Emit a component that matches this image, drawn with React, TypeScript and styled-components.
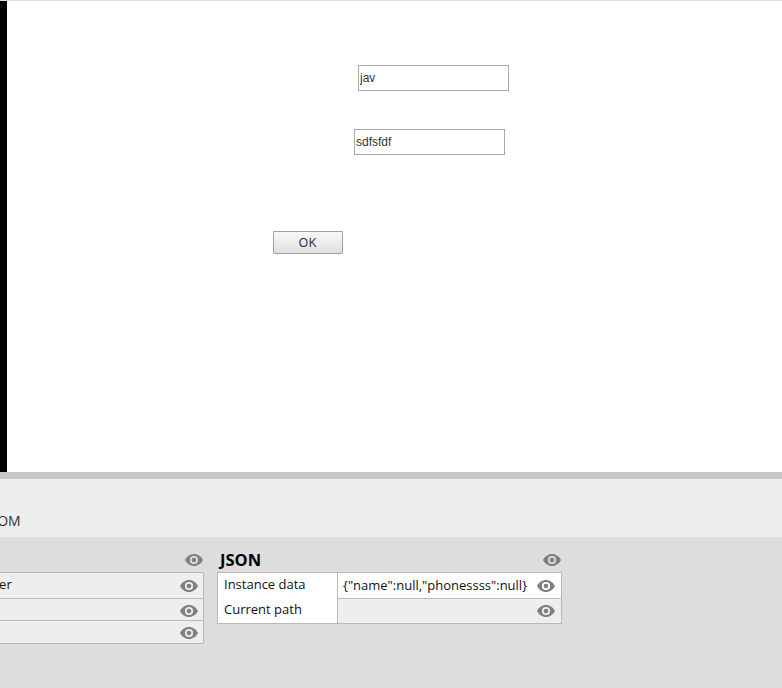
import { createGlobalStyle, styled } from "styled-components";

const GlobalStyle = createGlobalStyle`
  html, body {
    margin: 0;
    padding: 0;
    background: #dddddd;
  }
  body {
    width: 782px;
    height: 688px;
    overflow: hidden;
    font-family: "Open Sans", "Noto Sans", sans-serif;
  }
`;

const Page = styled.div`
  display: flex;
  flex-direction: column;
  width: 782px;
  height: 688px;
  overflow: hidden;
`;

const Stage = styled.div`
  display: flex;
  height: 472px;
  background: #ffffff;
  border-top: 1px solid #dcdcdc;
  box-sizing: border-box;
`;

const BlackBar = styled.div`
  width: 7px;
  background: #000000;
`;

const Form = styled.div`
  flex: 1;
  display: flex;
  flex-direction: column;
  align-items: flex-start;
  padding-top: 64px;
  font-family: "Liberation Sans", Arial, sans-serif;
`;

const TextField = styled.input<{ $left: number; $gap?: number }>`
  box-sizing: border-box;
  width: 151px;
  height: 26px;
  margin-left: ${(p) => p.$left}px;
  margin-bottom: ${(p) => p.$gap ?? 0}px;
  padding: 0 1px;
  border: 1px solid #a9a9a9;
  border-radius: 0;
  outline: none;
  background: #ffffff;
  color: #333333;
  font-family: inherit;
  font-size: 12px;
`;

const OkButton = styled.button`
  box-sizing: border-box;
  width: 70px;
  height: 23px;
  margin-left: 266px;
  padding: 0;
  border: 1px solid #a0a0a0;
  border-radius: 1px;
  background: linear-gradient(#f8f8f8, #e0e0e0);
  color: #333333;
  font-family: inherit;
  font-size: 12px;
  letter-spacing: 0.5px;
`;

const Splitter = styled.div`
  height: 7px;
  background: #c8c8c8;
`;

const TabBand = styled.div`
  display: flex;
  align-items: flex-end;
  height: 58px;
  padding-bottom: 6px;
  box-sizing: border-box;
  background: #eeeeee;
  color: #333333;
  font-size: 14px;
  line-height: 20px;
`;

const TabLabel = styled.span`
  margin-left: -13px;
`;

const Inspector = styled.div`
  flex: 1;
  display: flex;
  gap: 13px;
  align-items: flex-start;
  margin-left: -100px;
  padding-top: 12px;
  background: #dddddd;
`;

const Section = styled.section<{ $width: number }>`
  width: ${(p) => p.$width}px;
  flex: none;
`;

const SectionHead = styled.div`
  display: flex;
  align-items: center;
  justify-content: space-between;
  box-sizing: border-box;
  height: 23px;
  padding: 0 1px 2px 3px;
  color: #000000;
  font-size: 16.5px;
  font-weight: 700;
`;

const HeadTitle = styled.span`
  line-height: 20px;
`;

const Table = styled.div`
  border: 1px solid #b9b9b9;
  border-bottom: none;
  color: #111111;
  font-size: 13px;
`;

const Row = styled.div<{ $height: number }>`
  display: flex;
  box-sizing: border-box;
  height: ${(p) => p.$height}px;
  border-bottom: 1px solid #b9b9b9;
  line-height: 22px;
`;

const Label = styled.div<{ $lift?: number }>`
  flex: none;
  box-sizing: border-box;
  width: 119px;
  padding-left: 6px;
  background: #ffffff;
  margin-top: ${(p) => -(p.$lift ?? 0)}px;
`;

const Value = styled.div<{ $filled?: boolean }>`
  flex: 1;
  display: flex;
  align-items: center;
  justify-content: space-between;
  padding: 0 6px 0 5px;
  background: ${(p) => (p.$filled ? "#eeeeee" : "#ffffff")};
  border-left: 1px solid #b9b9b9;
  white-space: nowrap;
`;

const ValueText = styled.span`
  margin-bottom: 2px;
`;

const FlatRow = styled(Row)`
  background: #eeeeee;
  align-items: center;
  justify-content: space-between;
  padding: 0 5px 0 51px;

  & + & {
    padding-top: 2px;
  }
`;

const FlatText = styled.span`
  margin-bottom: 3px;
`;

const Eye = () => (
  <svg width="18" height="12" viewBox="0 0 18 12" fill="#808080" aria-hidden="true">
    <path
      fillRule="evenodd"
      d="M9 0C5 0 1.8 2.4 0 6c1.8 3.6 5 6 9 6s7.200-2.400 9-6c-1.800-3.600-5-6-9-6zm0 1.900a4.100 4.100 0 1 1 0 8.200 4.100 4.100 0 0 1 0-8.200z"
    />
    <circle cx="9" cy="6" r="2.300" />
  </svg>
);

export default function App() {
  return (
    <Page>
      <GlobalStyle />
      <Stage>
        <BlackBar />
        <Form>
          <TextField $left={351} $gap={38} defaultValue="jav" />
          <TextField $left={347} $gap={76} defaultValue="sdfsfdf" />
          <OkButton>OK</OkButton>
        </Form>
      </Stage>
      <Splitter />
      <TabBand>
        <TabLabel>DOM</TabLabel>
      </TabBand>
      <Inspector>
        <Section $width={304}>
          <SectionHead>
            <span />
            <Eye />
          </SectionHead>
          <Table>
            <FlatRow $height={26}>
              <FlatText>Container</FlatText>
              <Eye />
            </FlatRow>
            <FlatRow $height={22}>
              <span />
              <Eye />
            </FlatRow>
            <FlatRow $height={23}>
              <span />
              <Eye />
            </FlatRow>
          </Table>
        </Section>
        <Section $width={345}>
          <SectionHead>
            <HeadTitle>JSON</HeadTitle>
            <Eye />
          </SectionHead>
          <Table>
            <Row $height={26}>
              <Label>Instance data</Label>
              <Value>
                <ValueText>{'{"name":null,"phonessss":null}'}</ValueText>
                <Eye />
              </Value>
            </Row>
            <Row $height={25}>
              <Label $lift={1}>Current path</Label>
              <Value $filled>
                <span />
                <Eye />
              </Value>
            </Row>
          </Table>
        </Section>
      </Inspector>
    </Page>
  );
}
